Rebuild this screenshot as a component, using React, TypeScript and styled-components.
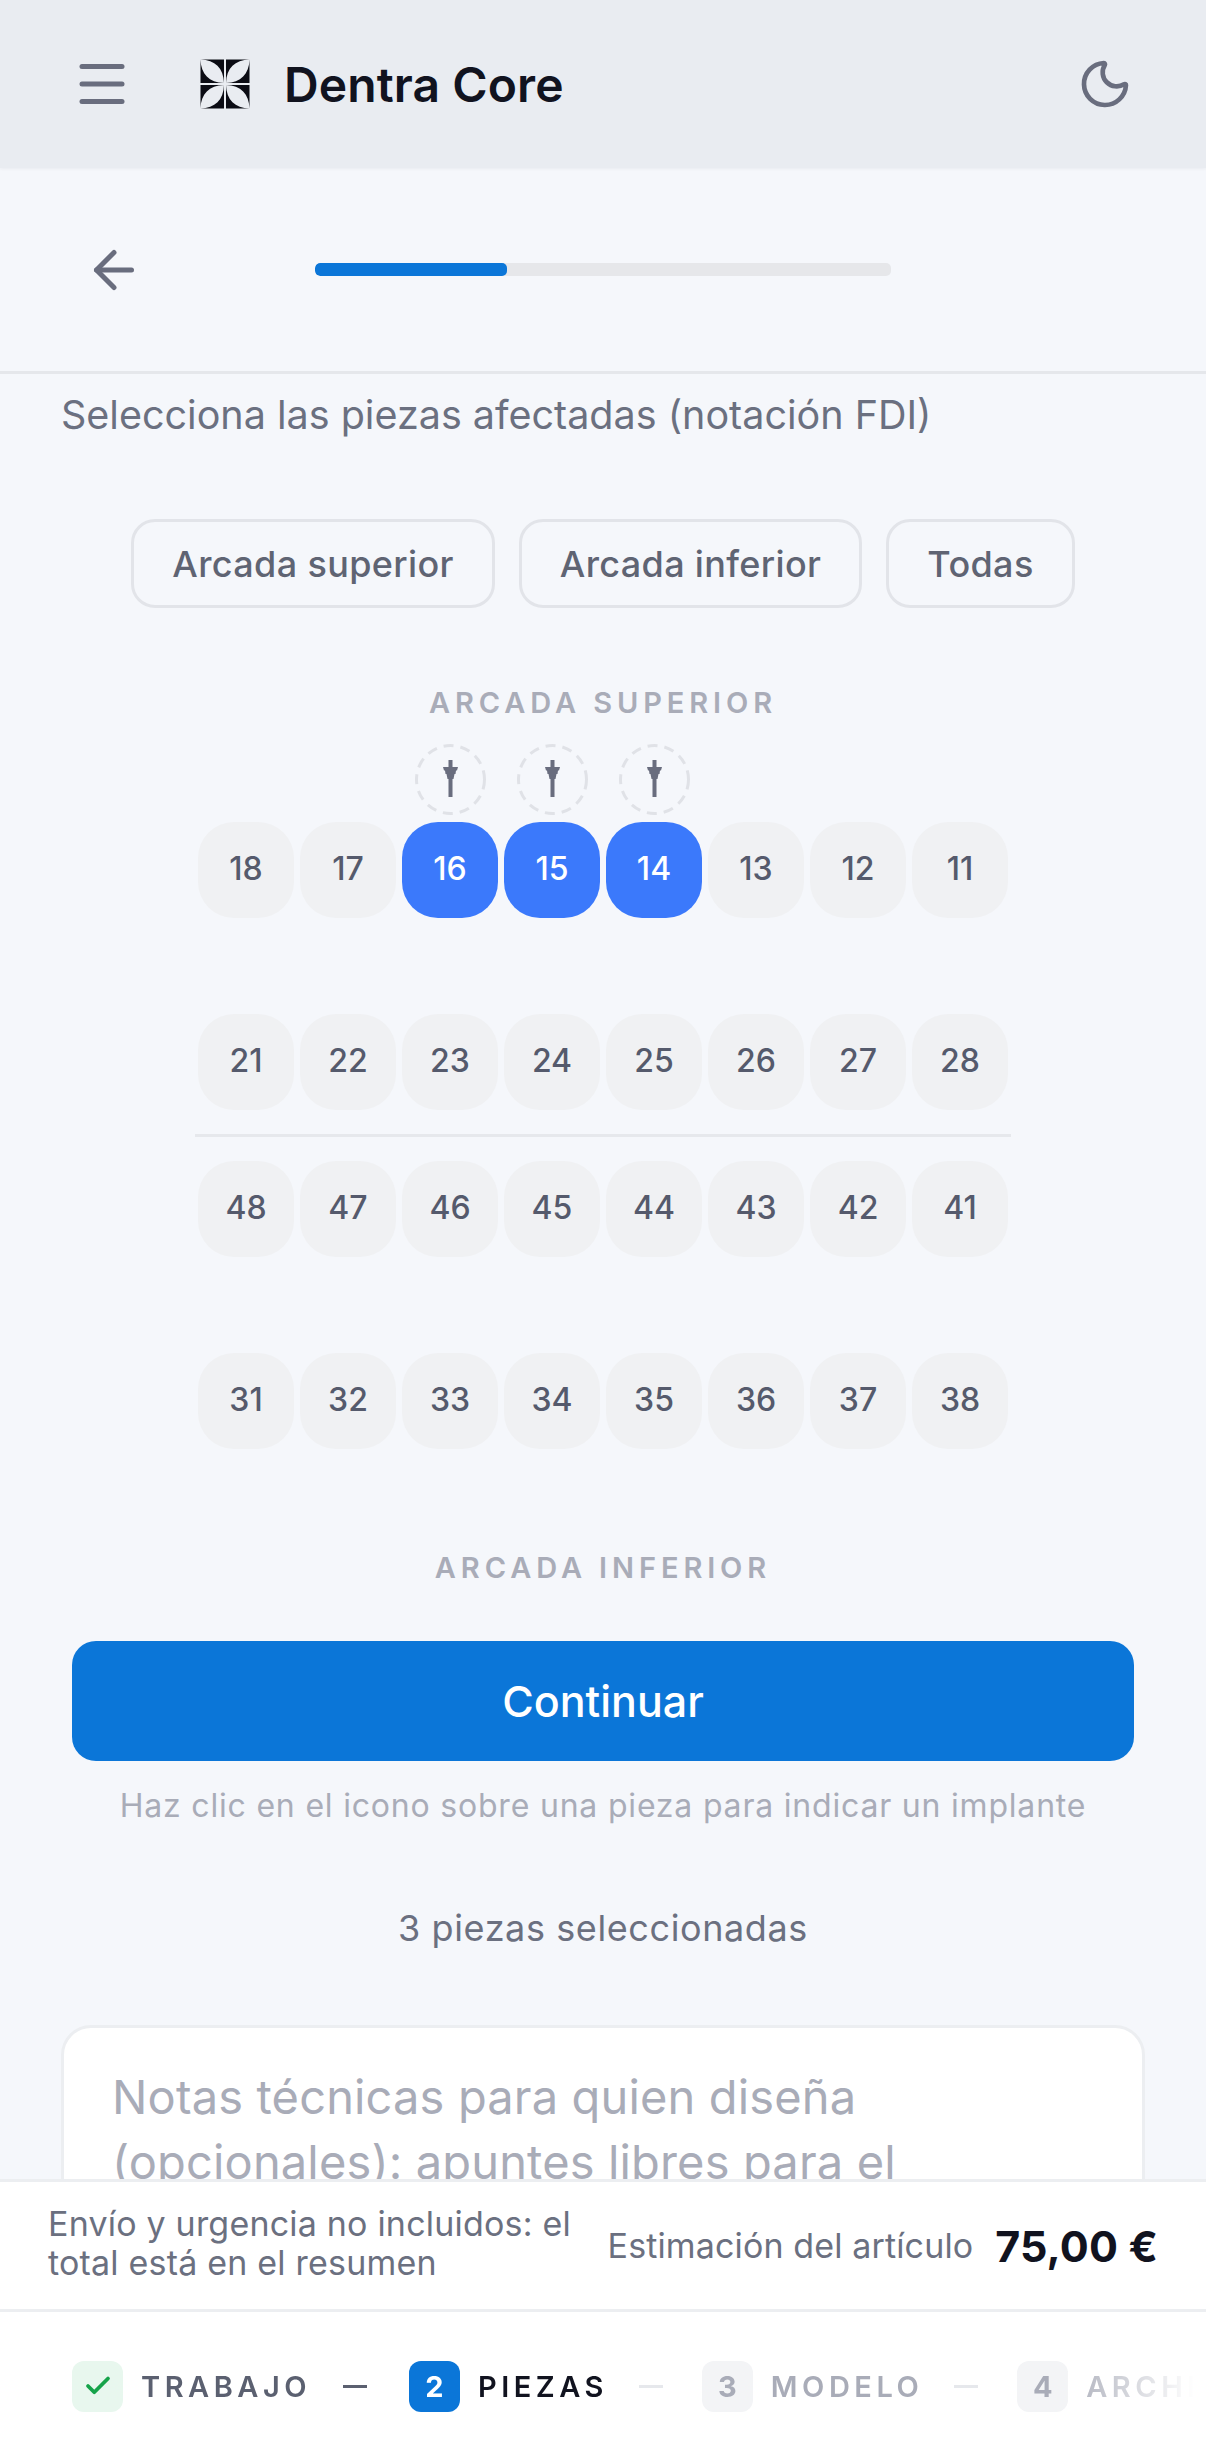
import React from "react";
import styled, { createGlobalStyle } from "styled-components";
import { ArrowLeft, Check, Menu, Moon } from "lucide-react";

const GlobalStyle = createGlobalStyle`
  html, body { margin: 0; padding: 0; background: #f5f7fb; }
  * { box-sizing: border-box; }
  body { font-family: Inter, "Noto Sans", sans-serif; }
`;

const Screen = styled.div`
  width: 1206px;
  height: 2460px;
  display: flex;
  flex-direction: column;
  overflow: hidden;
  background: #f5f7fb;
`;

const Header = styled.header`
  flex: none;
  height: 168px;
  display: flex;
  align-items: center;
  padding: 0 73px 0 72px;
  background: #e9ecf1;
  box-shadow: 0 1px 3px rgba(20, 24, 40, 0.05);
  svg { display: block; }
`;

const Brand = styled.div`
  display: flex;
  align-items: center;
  gap: 34px;
  margin-left: 68px;
  flex: 1;
  font-size: 48px;
  font-weight: 600;
  letter-spacing: 0.1px;
  color: #11131f;
`;

const ProgressBar = styled.div`
  flex: none;
  height: 206px;
  display: flex;
  align-items: center;
  padding-left: 84px;
  border-bottom: 3px solid #e5e7eb;
`;

const Track = styled.div`
  width: 576px;
  height: 13px;
  margin-left: 171px;
  border-radius: 5px;
  background: #e6e7ea;
  overflow: hidden;
`;

const Fill = styled.div`
  height: 100%;
  border-radius: 5px;
  background: #0b76d8;
`;

const Main = styled.main`
  flex: 1;
  min-height: 0;
  overflow: hidden;
  display: flex;
  flex-direction: column;
  padding: 16px 61px 0;
`;

const Intro = styled.p`
  margin: 0;
  font-size: 39.5px;
  line-height: 50px;
  color: #6b7080;
`;

const Chips = styled.div`
  display: flex;
  justify-content: center;
  gap: 24px;
  margin-top: 79px;
`;

const Chip = styled.button`
  height: 89px;
  padding: 0 38px;
  border: 3px solid #e2e4e9;
  border-radius: 24px;
  background: transparent;
  font: 500 36px Inter, sans-serif;
  letter-spacing: 0.35px;
  color: #5f6473;
`;

const ArchLabel = styled.div<{ $top: number }>`
  margin-top: ${(p) => p.$top}px;
  text-align: center;
  font-size: 29px;
  line-height: 36px;
  font-weight: 600;
  letter-spacing: 4.9px;
  color: #a9acb8;
`;

const Arch = styled.section`
  display: flex;
  flex-direction: column;
  gap: 18px;
  margin-top: 23px;
`;

const TeethRow = styled.div`
  display: grid;
  grid-template-columns: repeat(8, 96px);
  gap: 6px;
  justify-content: center;
`;

const Cell = styled.div<{ $lower?: boolean }>`
  display: flex;
  flex-direction: ${(p) => (p.$lower ? "column-reverse" : "column")};
  align-items: center;
  gap: 7px;
`;

const ImplantSlot = styled.div`
  width: 71px;
  height: 71px;
  svg { display: block; }
`;

const Tooth = styled.button<{ $selected?: boolean }>`
  width: 96px;
  height: 96px;
  padding: 0 0 3px;
  border: 0;
  border-radius: 36px;
  background: ${(p) => (p.$selected ? "#3b79fb" : "#f0f1f3")};
  color: ${(p) => (p.$selected ? "#ffffff" : "#555a6c")};
  font: 500 32px Inter, sans-serif;
`;

const ArchDivider = styled.hr`
  width: 816px;
  margin: 24px auto;
  border: 0;
  border-top: 3px solid #e6e8ec;
`;

const PrimaryButton = styled.button`
  flex: none;
  width: 1062px;
  height: 120px;
  margin: 55px 0 0 11px;
  border: 0;
  border-radius: 24px;
  background: #0b76d8;
  color: #ffffff;
  font: 500 43px Inter, sans-serif;
`;

const Hint = styled.p`
  margin: 25px 0 0;
  text-align: center;
  font-size: 32px;
  line-height: 40px;
  letter-spacing: 0.8px;
  color: #a9acb8;
`;

const Count = styled.p`
  margin: 80px 0 0;
  text-align: center;
  font-size: 36px;
  line-height: 44px;
  letter-spacing: 0.6px;
  color: #6b7080;
`;

const Notes = styled.textarea`
  flex: none;
  width: 1084px;
  height: 300px;
  margin-top: 75px;
  padding: 36px 48px;
  border: 3px solid #eceef1;
  border-radius: 30px;
  background: #ffffff;
  resize: none;
  font: 400 47px/65px Inter, sans-serif;
  letter-spacing: 0.15px;
  &::placeholder { color: #a9acb8; opacity: 1; }
`;

const Summary = styled.div`
  flex: none;
  height: 133px;
  display: flex;
  align-items: center;
  justify-content: space-between;
  padding: 0 48px;
  background: #ffffff;
  border-top: 3px solid #eceef1;
  border-bottom: 3px solid #eceef1;
`;

const SummaryNote = styled.div`
  width: 540px;
  padding-bottom: 6px;
  font-size: 34px;
  line-height: 39px;
  letter-spacing: 0.2px;
  color: #6b7080;
`;

const Estimate = styled.div`
  display: flex;
  align-items: center;
  gap: 22px;
  font-size: 34px;
  letter-spacing: 0.13px;
  color: #6b7080;
`;

const Price = styled.strong`
  font-size: 43px;
  font-weight: 700;
  color: #11131f;
`;

const Stepper = styled.nav`
  flex: none;
  height: 148px;
  background: #ffffff;
`;

const StepList = styled.div`
  height: 100%;
  display: flex;
  align-items: center;
  padding-left: 72px;
  overflow: hidden;
  white-space: nowrap;
  mask-image: linear-gradient(to right, #000 88%, transparent 99%);
`;

const Step = styled.div`
  display: flex;
  align-items: center;
  gap: 18px;
  flex: none;
`;

const StepBadge = styled.span<{ $state: "done" | "active" | "todo" }>`
  width: 51px;
  height: 51px;
  display: flex;
  align-items: center;
  justify-content: center;
  border-radius: 12px;
  font-size: 29px;
  font-weight: 700;
  color: ${(p) => (p.$state === "active" ? "#ffffff" : "#a9acb8")};
  background: ${(p) =>
    p.$state === "done" ? "#e8f7ee" : p.$state === "active" ? "#0b76d8" : "#f3f4f6"};
`;

const StepLabel = styled.span<{ $state: "done" | "active" | "todo" }>`
  font-size: 29px;
  font-weight: 600;
  letter-spacing: 4.5px;
  color: ${(p) =>
    p.$state === "done" ? "#5b6070" : p.$state === "active" ? "#11131f" : "#a9acb8"};
`;

const StepDash = styled.span<{ $strong?: boolean }>`
  flex: none;
  width: 24px;
  height: 3px;
  margin: 0 ${(p) => (p.$strong ? 42 : 39)}px 0 ${(p) => (p.$strong ? 32 : 31)}px;
  background: ${(p) => (p.$strong ? "#5b6070" : "#e6e8ec")};
`;

const LogoMark = () => (
  <svg width="50" height="50" viewBox="0 0 100 100" fill="#0b0c14" fillRule="evenodd">
    {[0, 90, 180, 270].map((angle) => (
      <path
        key={angle}
        transform={`rotate(${angle} 50 50)`}
        d="M1 1H48V48H1ZM1 1C30 2 47 18 48 48C18 47 2 30 1 1Z"
      />
    ))}
  </svg>
);

const ImplantIcon = () => (
  <svg width="71" height="71" viewBox="0 0 71 71">
    <circle cx="35.5" cy="35.5" r="34" fill="none" stroke="#e0e2e7" strokeWidth="3" strokeDasharray="10 7" />
    <path
      fill="#696d7e"
      d="M33.5 16H37.5V23H43L42 26.5H41L40.5 30H39.5L38.5 35H37.5V53H33.5V35H32.5L31.5 30H30.5L30 26.5H29L28 23H33.5Z"
    />
  </svg>
);

const upperA = [18, 17, 16, 15, 14, 13, 12, 11];
const upperB = [21, 22, 23, 24, 25, 26, 27, 28];
const lowerA = [48, 47, 46, 45, 44, 43, 42, 41];
const lowerB = [31, 32, 33, 34, 35, 36, 37, 38];
const selected = [16, 15, 14];

const Row = ({ teeth, lower }: { teeth: number[]; lower?: boolean }) => (
  <TeethRow>
    {teeth.map((n) => (
      <Cell key={n} $lower={lower}>
        <ImplantSlot>{selected.includes(n) && <ImplantIcon />}</ImplantSlot>
        <Tooth $selected={selected.includes(n)}>{n}</Tooth>
      </Cell>
    ))}
  </TeethRow>
);

export default function App() {
  return (
    <Screen>
      <GlobalStyle />
      <Header>
        <Menu size={60} color="#696d7e" strokeWidth={2} />
        <Brand>
          <LogoMark />
          Dentra Core
        </Brand>
        <Moon size={56} color="#696d7e" strokeWidth={2} />
      </Header>
      <ProgressBar>
        <ArrowLeft size={60} color="#696d7e" strokeWidth={2} />
        <Track>
          <Fill style={{ width: "33.3%" }} />
        </Track>
      </ProgressBar>
      <Main>
        <Intro>Selecciona las piezas afectadas (notación FDI)</Intro>
        <Chips>
          <Chip>Arcada superior</Chip>
          <Chip>Arcada inferior</Chip>
          <Chip>Todas</Chip>
        </Chips>
        <ArchLabel $top={77}>ARCADA SUPERIOR</ArchLabel>
        <Arch>
          <Row teeth={upperA} />
          <Row teeth={upperB} />
        </Arch>
        <ArchDivider />
        <Arch style={{ marginTop: 0 }}>
          <Row teeth={lowerA} lower />
          <Row teeth={lowerB} lower />
        </Arch>
        <ArchLabel $top={23}>ARCADA INFERIOR</ArchLabel>
        <PrimaryButton>Continuar</PrimaryButton>
        <Hint>Haz clic en el icono sobre una pieza para indicar un implante</Hint>
        <Count>3 piezas seleccionadas</Count>
        <Notes placeholder="Notas técnicas para quien diseña (opcionales): apuntes libres para el laboratorio" />
      </Main>
      <Summary>
        <SummaryNote>Envío y urgencia no incluidos: el total está en el resumen</SummaryNote>
        <Estimate>
          Estimación del artículo
          <Price>75,00 €</Price>
        </Estimate>
      </Summary>
      <Stepper>
        <StepList>
          <Step>
            <StepBadge $state="done">
              <Check size={30} color="#16a34a" strokeWidth={3} />
            </StepBadge>
            <StepLabel $state="done">TRABAJO</StepLabel>
          </Step>
          <StepDash $strong />
          <Step>
            <StepBadge $state="active">2</StepBadge>
            <StepLabel $state="active">PIEZAS</StepLabel>
          </Step>
          <StepDash />
          <Step>
            <StepBadge $state="todo">3</StepBadge>
            <StepLabel $state="todo">MODELO</StepLabel>
          </Step>
          <StepDash />
          <Step>
            <StepBadge $state="todo">4</StepBadge>
            <StepLabel $state="todo">ARCHIVOS</StepLabel>
          </Step>
        </StepList>
      </Stepper>
    </Screen>
  );
}
